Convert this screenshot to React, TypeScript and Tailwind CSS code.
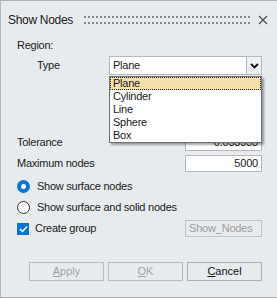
import React from "react";

const font = { fontFamily: '"Liberation Sans", Arial, sans-serif' };

const TitleDots: React.FC = () => (
  <svg width="166" height="10" className="shrink-0">
    <defs>
      <pattern id="dots" width="4" height="6" patternUnits="userSpaceOnUse">
        <rect x="0" y="0" width="2" height="2" fill="#858a8f" />
      </pattern>
    </defs>
    <rect x="0" y="0" width="166" height="8" fill="url(#dots)" />
  </svg>
);

const CloseIcon: React.FC = () => (
  <svg width="10" height="10" viewBox="0 0 10 10" className="shrink-0">
    <path d="M1 1 L9 9 M9 1 L1 9" stroke="#4a4a4a" strokeWidth="1.1" />
  </svg>
);

const Chevron: React.FC = () => (
  <svg width="9" height="6" viewBox="0 0 9 6">
    <path d="M1 1 L4.5 4.5 L8 1" fill="none" stroke="#111" strokeWidth="1.8" />
  </svg>
);

const options = ["Plane", "Cylinder", "Line", "Sphere", "Box"];

const Row: React.FC<{ label: string; children?: React.ReactNode }> = ({ label, children }) => (
  <div className="flex h-[21px] items-center justify-between pl-[16px] pr-[15px]">
    <span className="text-[11px] tracking-[-0.25px] text-[#1b1b1b]">{label}</span>
    {children}
  </div>
);

const NumberBox: React.FC<{ value: string }> = ({ value }) => (
  <div className="flex h-[17px] w-[77px] items-center justify-end border border-[#b5b9bd] bg-white pr-[3px] text-[11px] tracking-[-0.2px] text-[#1b1b1b]">
    {value}
  </div>
);

export default function App() {
  return (
    <div
      style={font}
      className="flex h-[298px] w-[277px] flex-col border-t border-b border-l border-[#aeb3b8] bg-[#e7ebee] select-none"
    >
      {/* title bar */}
      <div className="flex h-[37px] items-center pl-[7px] pr-[9px]">
        <span className="w-[76px] text-[12px] tracking-[-0.3px] text-[#1b1b1b]">Show Nodes</span>
        <div className="mt-[3px]">
          <TitleDots />
        </div>
        <div className="flex flex-1 justify-end">
          <CloseIcon />
        </div>
      </div>

      <div className="flex h-[14px] items-center pl-[16px] text-[11px] tracking-[-0.25px] text-[#1b1b1b]">Region:</div>

      {/* type select */}
      <div className="relative z-10 mt-[4px] flex h-[19px] items-center justify-between pl-[36px] pr-[15px]">
        <span className="text-[11px] tracking-[-0.25px] text-[#1b1b1b]">Type</span>
        <div className="relative h-[19px] w-[153px]">
          <div className="flex h-full border border-[#b5b9bd] bg-white">
            <div className="flex flex-1 items-center pl-[3px] text-[11px] tracking-[-0.25px] text-[#1b1b1b]">Plane</div>
            <div className="flex w-[15px] items-center justify-center border-l border-[#b5b9bd] bg-[#eef1f4]">
              <Chevron />
            </div>
          </div>
          <div className="absolute left-0 top-[20px] w-[153px] border border-[#6f7378] bg-white shadow-[2px_2px_2px_rgba(0,0,0,0.35)]">
            {options.map((o, i) => (
              <div
                key={o}
                className={
                  i === 0
                    ? "flex h-[13px] items-center border border-dotted border-[#222] bg-[#f4dfab] pl-[2px] text-[11px] tracking-[-0.25px] text-[#1b1b1b]"
                    : "flex h-[13px] items-center pl-[3px] text-[11px] tracking-[-0.25px] text-[#1b1b1b]"
                }
              >
                {o}
              </div>
            ))}
          </div>
        </div>
      </div>

      <div className="mt-[57px]">
        <Row label="Tolerance">
          <NumberBox value="0.033333" />
        </Row>
        <Row label="Maximum nodes">
          <NumberBox value="5000" />
        </Row>
      </div>

      <div className="mt-[2px]">
        <div className="flex h-[21px] items-center gap-[7px] pl-[16px]">
          <span className="flex h-[13px] w-[13px] items-center justify-center rounded-full bg-[#0a74d6]">
            <span className="h-[5px] w-[5px] rounded-full bg-white" />
          </span>
          <span className="text-[11px] tracking-[-0.25px] text-[#1b1b1b]">Show surface nodes</span>
        </div>
        <div className="flex h-[21px] items-center gap-[7px] pl-[16px]">
          <span className="h-[13px] w-[13px] rounded-full border border-[#333] bg-white" />
          <span className="text-[11px] tracking-[-0.25px] text-[#1b1b1b]">Show surface and solid nodes</span>
        </div>
        <div className="flex h-[21px] items-center justify-between pl-[16px] pr-[15px]">
          <div className="flex items-center gap-[6px]">
            <span className="flex h-[12px] w-[12px] items-center justify-center bg-[#0a74d6]">
              <svg width="9" height="8" viewBox="0 0 9 8">
                <path d="M1 4 L3.5 6.5 L8 1.5" fill="none" stroke="white" strokeWidth="1.5" />
              </svg>
            </span>
            <span className="text-[11px] tracking-[-0.25px] text-[#1b1b1b]">Create group</span>
          </div>
          <div className="flex h-[17px] w-[77px] items-center border border-[#bfc3c7] pl-[3px] text-[11px] tracking-[-0.2px] text-[#9c9c9c]">
            Show_Nodes
          </div>
        </div>
      </div>

      {/* buttons */}
      <div className="mt-[23px] flex justify-end gap-[4px] pr-[15px]">
        <button className="h-[19px] w-[75px] border border-[#b9bdc1] bg-[#e7ebee] text-[11px] text-[#a2a2a2]">
          <span className="underline">A</span>pply
        </button>
        <button className="h-[19px] w-[75px] border border-[#b9bdc1] bg-[#e7ebee] text-[11px] text-[#a2a2a2]">
          <span className="underline">O</span>K
        </button>
        <button className="h-[19px] w-[75px] border border-[#adb1b5] bg-[#e7ebee] text-[11px] text-[#111]">
          <span className="underline">C</span>ancel
        </button>
      </div>
    </div>
  );
}
